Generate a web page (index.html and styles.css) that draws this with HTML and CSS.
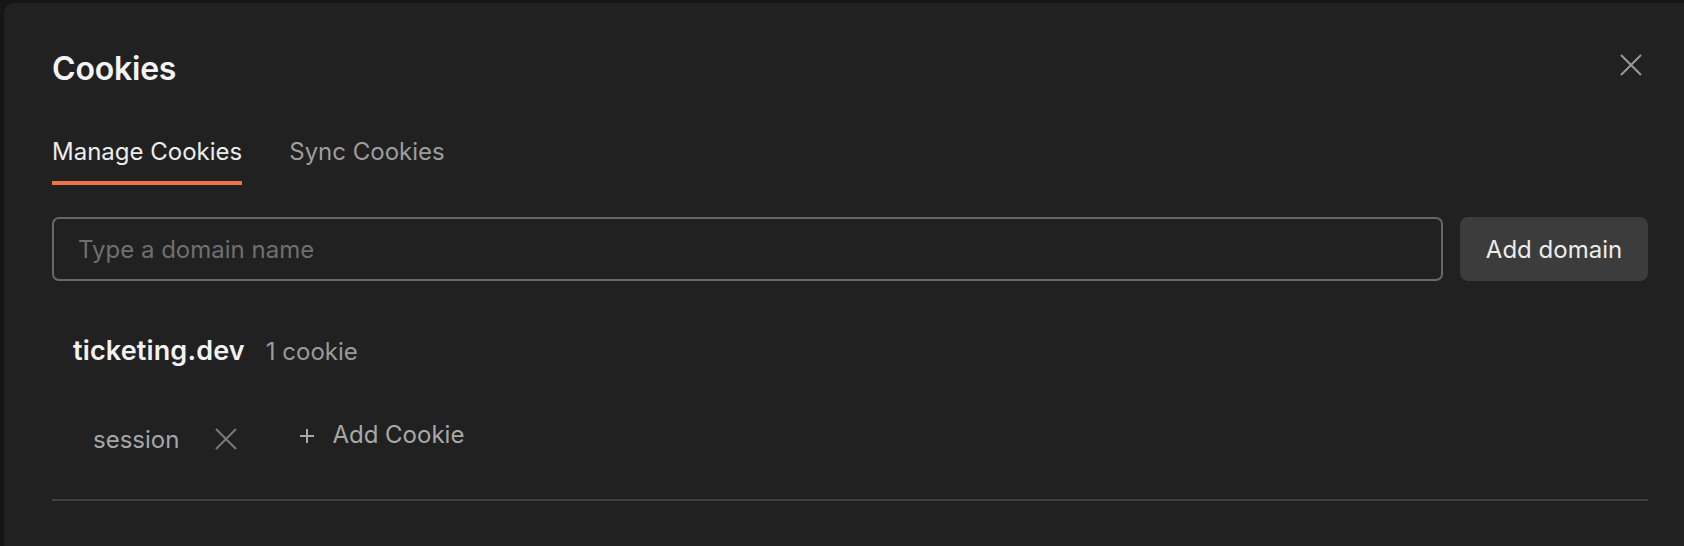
FILE: index.html
```html
<!DOCTYPE html>
<html lang="en">
<head>
<meta charset="utf-8">
<title>Cookies</title>
<link rel="stylesheet" href="styles.css">
</head>
<body>
<div class="modal">
  <div class="modal-header">
    <h1 class="modal-title">Cookies</h1>
    <button class="close-btn" aria-label="Close">
      <svg width="22" height="22" viewBox="0 0 22 22"><path d="M1 1 L21 21 M21 1 L1 21" stroke="#9a9a9a" stroke-width="2" fill="none"/></svg>
    </button>
  </div>
  <div class="tabs">
    <div class="tab active">Manage Cookies</div>
    <div class="tab">Sync Cookies</div>
  </div>
  <div class="domain-form">
    <input class="domain-input" type="text" placeholder="Type a domain name">
    <button class="add-domain">Add domain</button>
  </div>
  <div class="domain">
    <div class="domain-head">
      <span class="domain-name">ticketing.dev</span>
      <span class="domain-count">1 cookie</span>
    </div>
    <div class="cookie-row">
      <div class="cookie-chip">
        <span class="cookie-name">session</span>
        <svg class="cookie-x" width="22" height="22" viewBox="0 0 22 22"><path d="M1 1 L21 21 M21 1 L1 21" stroke="#7a7a7a" stroke-width="2" fill="none"/></svg>
      </div>
      <div class="add-cookie">
        <svg width="14" height="14" viewBox="0 0 14 14"><path d="M7 0 V14 M0 7 H14" stroke="#a8a8a8" stroke-width="2" fill="none"/></svg>
        <span>Add Cookie</span>
      </div>
    </div>
  </div>
  <div class="separator"></div>
</div>
</body>
</html>
```

FILE: styles.css
```css
* { box-sizing: border-box; }
html, body {
  margin: 0;
  padding: 0;
  background: #161616;
  overflow: hidden;
  font-family: Inter, "Noto Sans", sans-serif;
}
.modal {
  margin: 3px 0 0 4px;
  width: 1692px;
  height: 543px;
  overflow: hidden;
  background: #212121;
  border-radius: 10px 10px 0 0;
  padding: 46px 48px 0 48px;
}
.modal-header {
  display: flex;
  justify-content: space-between;
  align-items: flex-start;
}
.modal-title {
  margin: 0;
  font-size: 32px;
  line-height: 40px;
  font-weight: 600;
  color: #f4f4f4;
  letter-spacing: -0.2px;
}
.close-btn {
  background: none;
  border: none;
  padding: 0;
  margin: 5px 6px 0 0;
  width: 22px;
  height: 22px;
  display: flex;
}
.tabs {
  display: flex;
  gap: 47px;
  margin-top: 47px;
}
.tab {
  font-size: 24px;
  line-height: 32px;
  color: #9d9d9d;
  padding-bottom: 13px;
  border-bottom: 4px solid transparent;
}
.tab.active {
  color: #ececec;
  border-bottom-color: #f07443;
}
.domain-form {
  display: flex;
  gap: 17px;
  margin-top: 32px;
}
.domain-input {
  flex: 1;
  height: 64px;
  border: 2px solid #686868;
  border-radius: 7px;
  background: #212121;
  padding: 0 24px;
  font-family: inherit;
  font-size: 24px;
  color: #e0e0e0;
  outline: none;
}
.domain-input::placeholder {
  color: #6f6f6f;
}
.add-domain {
  height: 64px;
  width: 188px;
  border: none;
  border-radius: 8px;
  background: #3c3c3c;
  color: #ececec;
  font-family: inherit;
  font-size: 24px;
  padding: 0;
}
.domain {
  padding-left: 21px;
}
.domain-head {
  display: flex;
  align-items: baseline;
  gap: 21px;
  margin-top: 52px;
  line-height: 36px;
}
.domain-name {
  font-size: 27px;
  font-weight: 600;
  color: #f2f2f2;
  letter-spacing: 0.15px;
}
.domain-count {
  font-size: 24px;
  color: #9a9a9a;
}
.cookie-row {
  display: flex;
  align-items: flex-start;
  margin-top: 49px;
  padding-left: 20px;
}
.cookie-chip {
  display: flex;
  align-items: flex-start;
  gap: 36px;
  margin-top: 5px;
}
.cookie-name {
  font-size: 24px;
  line-height: 32px;
  color: #a6a6a6;
}
.cookie-x {
  margin-top: 4px;
}
.add-cookie {
  display: flex;
  align-items: center;
  gap: 18px;
  margin-left: 63px;
  font-size: 24px;
  line-height: 32px;
  color: #a8a8a8;
}
.add-cookie svg {
  margin-top: 2px;
}
.separator {
  margin-top: 43px;
  height: 2px;
  background: #404040;
}
```
